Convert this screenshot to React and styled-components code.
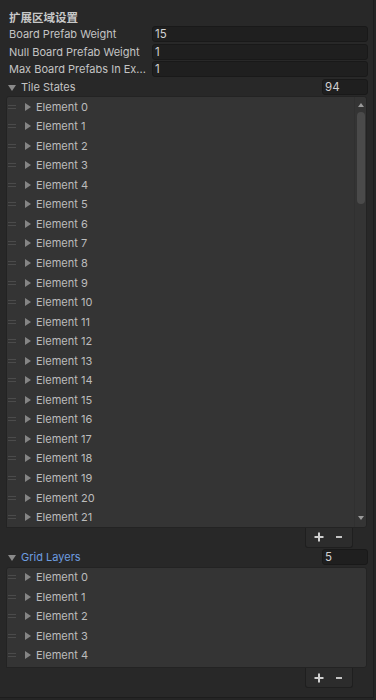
import styled, { createGlobalStyle } from "styled-components";

const GlobalStyle = createGlobalStyle`
  html, body {
    margin: 0;
    padding: 0;
    background: #252525;
  }
  * {
    box-sizing: border-box;
  }
`;

const FONT = `Inter, "Noto Sans", "Noto Sans CJK SC", sans-serif`;

const Panel = styled.div`
  width: 374px;
  height: 698px;
  background: #282828;
  border-right: 1px solid #1d1d1d;
  border-bottom: 1px solid #1d1d1d;
  padding: 0 6px;
  font-family: ${FONT};
  font-size: 11px;
  line-height: 14px;
  color: #c4c4c4;
  overflow: hidden;
`;

const Header = styled.div`
  height: 25.5px;
  padding: 9px 0 0 3px;
  line-height: 16px;
  font-weight: 700;
  font-family: "Noto Sans CJK SC", ${FONT};
  font-size: 11.5px;
  color: #c8c8c8;
`;

const Row = styled.div`
  display: flex;
  align-items: center;
  height: ${(p) => p.$h || 17.6}px;
  padding-left: 3px;
`;

const Label = styled.div`
  width: 143px;
  flex: none;
  white-space: nowrap;
  color: #c4c4c4;
`;

const Field = styled.div`
  flex: 1;
  height: 16px;
  line-height: 14px;
  padding-left: 2px;
  margin-right: -1px;
  background: #1f1f1f;
  border: 1px solid #191919;
  border-radius: 3px;
  color: #d2d2d2;
  font-size: 11.5px;
`;

const FoldLabel = styled.div`
  flex: 1;
  display: flex;
  align-items: center;
  color: ${(p) => (p.$override ? "#6d9de0" : "#c4c4c4")};
`;

const CountField = styled(Field)`
  flex: none;
  width: 46px;
`;

const Triangle = styled.span`
  display: inline-block;
  width: 0;
  height: 0;
  flex: none;
  ${(p) =>
    p.$open
      ? `
    border-left: 4px solid transparent;
    border-right: 4px solid transparent;
    border-top: 6px solid #8a8a8a;
    margin: 1px 5px 0 -1px;
  `
      : `
    border-top: 4px solid transparent;
    border-bottom: 4px solid transparent;
    border-left: 6px solid #858585;
    margin-right: 5px;
  `}
`;

const ListBox = styled.div`
  display: flex;
  background: #343434;
  border: 1px solid #232323;
  border-radius: 3px 3px 3px 0;
  padding-bottom: ${(p) => p.$pb || 0}px;
`;

const Items = styled.div`
  flex: 1;
`;

const Item = styled.div`
  display: flex;
  align-items: center;
  height: 19.55px;
  padding-left: 1px;
  color: #bcbcbc;
  white-space: nowrap;
`;

const Handle = styled.span`
  width: 8px;
  height: 4px;
  flex: none;
  margin-right: 9px;
  border-top: 1px solid #4b4b4b;
  border-bottom: 1px solid #4b4b4b;
`;

const ScrollBar = styled.div`
  width: 12px;
  flex: none;
  display: flex;
  flex-direction: column;
  align-items: center;
  padding: 6px 0 7px;
  border-left: 1px solid #303030;
`;

const Arrow = styled.span`
  width: 0;
  height: 0;
  border-left: 3.5px solid transparent;
  border-right: 3.5px solid transparent;
  ${(p) =>
    p.$down
      ? "border-top: 4px solid #9a9a9a; margin-top: auto;"
      : "border-bottom: 4px solid #9a9a9a;"}
`;

const Thumb = styled.div`
  width: 8px;
  height: 92px;
  margin-top: 5px;
  border-radius: 4px;
  background: #4a4a4a;
`;

const FooterRow = styled.div`
  display: flex;
  justify-content: flex-end;
  padding-right: 14px;
`;

const Footer = styled.div`
  display: flex;
  gap: 4px;
  height: 20px;
  padding: 0 5px;
  align-items: center;
  background: #2c2c2c;
  border: 1px solid #1f1f1f;
  border-top: none;
  border-radius: 0 0 3px 3px;
`;

const FooterButton = styled.div`
  width: 16px;
  height: 16px;
  display: flex;
  align-items: center;
  justify-content: center;
`;

const Plus = () => (
  <svg width="10" height="10" viewBox="0 0 10 10">
    <path d="M5 0.5v9M0.5 5h9" stroke="#d0d0d0" strokeWidth="2" />
  </svg>
);

const Minus = () => (
  <svg width="6" height="10" viewBox="0 0 6 10">
    <path d="M0 5h6" stroke="#c4c4c4" strokeWidth="2" />
  </svg>
);

const ListFooter = () => (
  <FooterRow>
    <Footer>
      <FooterButton>
        <Plus />
      </FooterButton>
      <FooterButton>
        <Minus />
      </FooterButton>
    </Footer>
  </FooterRow>
);

const fields = [
  { label: "Board Prefab Weight", value: "15" },
  { label: "Null Board Prefab Weight", value: "1" },
  { label: "Max Board Prefabs In Ex...", value: "1" },
];

const range = (n) => Array.from({ length: n }, (_, i) => i);

const Element = ({ index }) => (
  <Item>
    <Handle />
    <Triangle />
    Element {index}
  </Item>
);

export default function App() {
  return (
    <>
      <GlobalStyle />
      <Panel>
        <Header>扩展区域设置</Header>
        {fields.map((f) => (
          <Row key={f.label}>
            <Label>{f.label}</Label>
            <Field>{f.value}</Field>
          </Row>
        ))}
        <Row>
          <FoldLabel>
            <Triangle $open />
            Tile States
          </FoldLabel>
          <CountField>94</CountField>
        </Row>
        <ListBox>
          <Items>
            {range(22).map((i) => (
              <Element key={i} index={i} />
            ))}
          </Items>
          <ScrollBar>
            <Arrow />
            <Thumb />
            <Arrow $down />
          </ScrollBar>
        </ListBox>
        <ListFooter />
        <Row $h={18.6}>
          <FoldLabel $override>
            <Triangle $open />
            Grid Layers
          </FoldLabel>
          <CountField>5</CountField>
        </Row>
        <ListBox $pb={2}>
          <Items>
            {range(5).map((i) => (
              <Element key={i} index={i} />
            ))}
          </Items>
        </ListBox>
        <ListFooter />
      </Panel>
    </>
  );
}
